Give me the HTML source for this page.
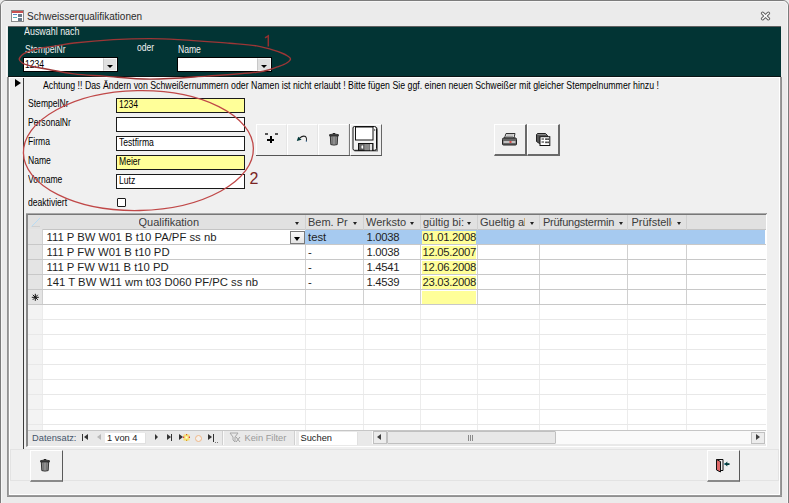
<!DOCTYPE html>
<html><head><meta charset="utf-8">
<style>
*{margin:0;padding:0;box-sizing:border-box}
html,body{width:789px;height:503px;overflow:hidden;background:#ebebeb;font-family:"Liberation Sans",sans-serif;}
.a{position:absolute}
.t{position:absolute;white-space:nowrap;line-height:11px;font-size:11px;transform-origin:0 0;color:#000}
.ms{transform:scaleX(0.78)}
.d{position:absolute;white-space:nowrap;line-height:11px;font-size:11.3px;color:#1e1e1e;overflow:hidden}
.h{position:absolute;white-space:nowrap;line-height:11px;font-size:11px;color:#3c3c3c;overflow:hidden}
svg{position:absolute;overflow:visible}
</style></head><body>
<div class="a" style="left:0px;top:0px;width:789px;height:510px;border:1px solid #7c7c7c;border-radius:6px 6px 0 0;background:#ebebeb"></div>
<div class="a" style="left:1px;top:1px;width:787px;height:508px;border:1px solid #f6f6f6;border-radius:5px 5px 0 0"></div>
<div class="a" style="left:11px;top:10px;width:13px;height:12px;border:1px solid #8a8a8a;background:#fff"></div>
<div class="a" style="left:12px;top:11px;width:11px;height:2px;background:#c85050"></div>
<div class="a" style="left:13px;top:14px;width:4px;height:1px;background:#5a8ac8"></div>
<div class="a" style="left:18px;top:14px;width:4px;height:3px;background:#6a7a8a"></div>
<div class="a" style="left:13px;top:17px;width:4px;height:1px;background:#5ab0b8"></div>
<div class="a" style="left:18px;top:18px;width:4px;height:3px;background:#6a7a8a"></div>
<div class="t" style="left:27px;top:11.5px;font-size:10px;line-height:10px;color:#2a2a2a">Schweisserqualifikationen</div>
<svg style="left:760px;top:10.5px" width="11" height="10" viewBox="0 0 11 10"><path d="M2.6 2.3 L8.4 7.7 M8.4 2.3 L2.6 7.7" stroke="#606060" stroke-width="3.4" stroke-linecap="round"/><path d="M2.6 2.3 L8.4 7.7 M8.4 2.3 L2.6 7.7" stroke="#fafafa" stroke-width="1.5" stroke-linecap="round"/></svg>
<div class="a" style="left:9px;top:77px;width:771px;height:418px;background:#f0f0f0"></div>
<div class="a" style="left:7px;top:77px;width:2px;height:420px;background:linear-gradient(90deg,#8a8a8a,#a8a8a8)"></div>
<div class="a" style="left:9px;top:77px;width:1px;height:418px;background:#fff"></div>
<div class="a" style="left:780px;top:77px;width:2px;height:420px;background:linear-gradient(90deg,#a0a0a0,#8a8a8a)"></div>
<div class="a" style="left:779px;top:77px;width:1px;height:418px;background:#fff"></div>
<div class="a" style="left:9px;top:494px;width:771px;height:1px;background:#fff"></div>
<div class="a" style="left:7px;top:495px;width:775px;height:2px;background:linear-gradient(#a0a0a0,#8a8a8a)"></div>
<div class="a" style="left:9px;top:77px;width:771px;height:1px;background:#fff"></div>
<div class="a" style="left:6px;top:26px;width:1px;height:51px;background:#f8f8f8"></div>
<div class="a" style="left:8px;top:26px;width:773px;height:51px;background:#023434;border-top:1px solid #606060;border-bottom:1px solid #0a1414"></div>
<div class="t" style="left:24px;top:25.5px;color:#f0f0f0;transform:scaleX(0.81)">Auswahl nach</div>
<div class="t ms" style="left:25px;top:44px;color:#f0f0f0">StempelNr</div>
<div class="t ms" style="left:137px;top:41.6px;color:#f0f0f0">oder</div>
<div class="t ms" style="left:178px;top:43.7px;color:#f0f0f0">Name</div>
<div class="a" style="left:23px;top:57px;width:95px;height:15px;background:#fff;border:1px solid #000;border-bottom-width:1.5px"></div>
<div class="a" style="left:103px;top:58px;width:14px;height:13px;background:#e0e0e0;border:1px solid #f4f4f4;border-left-color:#c8c8c8"></div>
<div class="a" style="left:107px;top:64.5px;width:0px;height:0px;border-left:3px solid transparent;border-right:3px solid transparent;border-top:3.2px solid #000"></div>
<div class="t ms" style="left:25px;top:58.8px;">1234</div>
<div class="a" style="left:177px;top:57px;width:95px;height:15px;background:#fff;border:1px solid #000;border-bottom-width:1.5px"></div>
<div class="a" style="left:257px;top:58px;width:14px;height:13px;background:#e0e0e0;border:1px solid #f4f4f4;border-left-color:#c8c8c8"></div>
<div class="a" style="left:261px;top:64.5px;width:0px;height:0px;border-left:3px solid transparent;border-right:3px solid transparent;border-top:3.2px solid #000"></div>
<div class="a" style="left:10px;top:78px;width:14px;height:372px;background:#efefef;border-right:1px solid #3a3a3a"></div>
<div class="a" style="left:15px;top:79px;width:0px;height:0px;border-top:4.5px solid transparent;border-bottom:4.5px solid transparent;border-left:6px solid #000"></div>
<div class="t" style="left:43px;top:80.4px;transform:scaleX(0.797)">Achtung !! Das Ändern von Schweißernummern oder Namen ist nicht erlaubt ! Bitte fügen Sie ggf. einen neuen Schweißer mit gleicher Stempelnummer hinzu !</div>
<div class="t ms" style="left:28px;top:97.6px;">StempelNr</div>
<div class="t ms" style="left:28px;top:116.6px;">PersonalNr</div>
<div class="t ms" style="left:28px;top:136.1px;">Firma</div>
<div class="t ms" style="left:28px;top:155.1px;">Name</div>
<div class="t ms" style="left:28px;top:174.1px;">Vorname</div>
<div class="t ms" style="left:28px;top:196.5px;">deaktiviert</div>
<div class="a" style="left:116px;top:98px;width:129px;height:15px;border:1px solid #1a1a1a;background:#ffff99"></div>
<div class="t ms" style="left:119px;top:98.5px;">1234</div>
<div class="a" style="left:116px;top:117px;width:129px;height:15px;border:1px solid #1a1a1a;background:#fff"></div>
<div class="a" style="left:116px;top:136px;width:129px;height:15px;border:1px solid #1a1a1a;background:#fff"></div>
<div class="t ms" style="left:119px;top:136.5px;">Testfirma</div>
<div class="a" style="left:116px;top:155px;width:129px;height:15px;border:1px solid #1a1a1a;background:#ffff99"></div>
<div class="t ms" style="left:119px;top:155.5px;">Meier</div>
<div class="a" style="left:116px;top:174px;width:129px;height:15px;border:1px solid #1a1a1a;background:#fff"></div>
<div class="t ms" style="left:119px;top:174.5px;">Lutz</div>
<div class="a" style="left:117px;top:198px;width:9px;height:9px;border:1px solid #1a1a1a;border-radius:1px;background:#fff"></div>
<div class="a" style="left:256px;top:124px;width:31px;height:31px;background:#f0f0f0;border-top:1px solid #fff;border-left:1px solid #fff;border-right:1px solid #e6e6e6"></div>
<div class="a" style="left:287px;top:124px;width:31px;height:31px;background:#f0f0f0;border-top:1px solid #fff;border-left:1px solid #fff;border-right:1px solid #e6e6e6"></div>
<div class="a" style="left:318px;top:124px;width:31px;height:31px;background:#f0f0f0;border-top:1px solid #fff;border-left:1px solid #fff;border-right:1px solid #e6e6e6"></div>
<div class="a" style="left:256px;top:155px;width:94px;height:1px;background:#555"></div>
<div class="a" style="left:349px;top:124px;width:1px;height:31px;background:#7a7a7a"></div>
<div class="a" style="left:350px;top:124px;width:32px;height:32px;background:#f0f0f0;border-top:1px solid #fff;border-left:1px solid #fff;border-right:1px solid #666;border-bottom:1px solid #555"></div>
<div class="a" style="left:494px;top:124px;width:33px;height:32px;background:#f0f0f0;border-top:1px solid #fff;border-left:1px solid #fff;border-right:2px solid #6a6a6a;border-bottom:2px solid #6a6a6a"></div>
<div class="a" style="left:527px;top:124px;width:33px;height:32px;background:#f0f0f0;border-top:1px solid #fff;border-left:1px solid #fff;border-right:2px solid #6a6a6a;border-bottom:2px solid #6a6a6a"></div>
<div class="a" style="left:26px;top:213px;width:741px;height:234px;background:#fff;border-top:2px solid #777;border-left:2px solid #888;border-right:1px solid #fff;border-bottom:1px solid #fff"></div>
<div class="a" style="left:26px;top:213px;width:740px;height:1px;background:#a8a8a8"></div>
<div class="a" style="left:28px;top:215px;width:738px;height:14px;background:#e1e1e1"></div>
<div class="a" style="left:42px;top:229px;width:724px;height:1px;background:#c4c4c4"></div>
<div class="a" style="left:42px;top:229px;width:1px;height:75px;background:#d0d0d0"></div>
<div class="a" style="left:42px;top:304px;width:1px;height:126px;background:#ececec"></div>
<div class="a" style="left:305px;top:215px;width:1px;height:89px;background:#d0d0d0"></div>
<div class="a" style="left:305px;top:304px;width:1px;height:126px;background:#ececec"></div>
<div class="a" style="left:363px;top:215px;width:1px;height:89px;background:#d0d0d0"></div>
<div class="a" style="left:363px;top:304px;width:1px;height:126px;background:#ececec"></div>
<div class="a" style="left:420px;top:215px;width:1px;height:89px;background:#d0d0d0"></div>
<div class="a" style="left:420px;top:304px;width:1px;height:126px;background:#ececec"></div>
<div class="a" style="left:477px;top:215px;width:1px;height:89px;background:#d0d0d0"></div>
<div class="a" style="left:477px;top:304px;width:1px;height:126px;background:#ececec"></div>
<div class="a" style="left:539px;top:215px;width:1px;height:89px;background:#d0d0d0"></div>
<div class="a" style="left:539px;top:304px;width:1px;height:126px;background:#ececec"></div>
<div class="a" style="left:627px;top:215px;width:1px;height:89px;background:#d0d0d0"></div>
<div class="a" style="left:627px;top:304px;width:1px;height:126px;background:#ececec"></div>
<div class="a" style="left:686px;top:215px;width:1px;height:89px;background:#d0d0d0"></div>
<div class="a" style="left:686px;top:304px;width:1px;height:126px;background:#ececec"></div>
<div class="a" style="left:28px;top:304px;width:14px;height:126px;background:#f3f3f3"></div>
<div class="a" style="left:28px;top:229px;width:14px;height:75px;background:#e4e4e4"></div>
<div class="a" style="left:28px;top:244px;width:738px;height:1px;background:#c8c8c8"></div>
<div class="a" style="left:28px;top:259px;width:738px;height:1px;background:#c8c8c8"></div>
<div class="a" style="left:28px;top:274px;width:738px;height:1px;background:#c8c8c8"></div>
<div class="a" style="left:28px;top:289px;width:738px;height:1px;background:#c8c8c8"></div>
<div class="a" style="left:28px;top:304px;width:738px;height:1px;background:#c8c8c8"></div>
<div class="a" style="left:28px;top:319px;width:738px;height:1px;background:#e8e8e8"></div>
<div class="a" style="left:28px;top:334px;width:738px;height:1px;background:#e8e8e8"></div>
<div class="a" style="left:28px;top:349px;width:738px;height:1px;background:#e8e8e8"></div>
<div class="a" style="left:28px;top:364px;width:738px;height:1px;background:#e8e8e8"></div>
<div class="a" style="left:28px;top:379px;width:738px;height:1px;background:#e8e8e8"></div>
<div class="a" style="left:28px;top:394px;width:738px;height:1px;background:#e8e8e8"></div>
<div class="a" style="left:28px;top:409px;width:738px;height:1px;background:#e8e8e8"></div>
<div class="a" style="left:28px;top:424px;width:738px;height:1px;background:#e8e8e8"></div>
<div class="a" style="left:43px;top:230px;width:722px;height:14px;background:#a6caf0"></div>
<div class="a" style="left:43px;top:230px;width:262px;height:14px;background:#fff"></div>
<div class="a" style="left:422px;top:231px;width:54px;height:13px;background:#ffff99"></div>
<div class="a" style="left:422px;top:246px;width:54px;height:13px;background:#ffff99"></div>
<div class="a" style="left:422px;top:261px;width:54px;height:13px;background:#ffff99"></div>
<div class="a" style="left:422px;top:276px;width:54px;height:13px;background:#ffff99"></div>
<div class="a" style="left:422px;top:291px;width:54px;height:13px;background:#ffff99"></div>
<div class="h" style="left:138.5px;top:216.8px;width:70px;height:12px">Qualifikation</div>
<div class="a" style="left:295px;top:222px;width:0px;height:0px;border-left:2.8px solid transparent;border-right:2.8px solid transparent;border-top:3.2px solid #222"></div>
<div class="h" style="left:308px;top:216.8px;width:41.5px;height:12px">Bem. Pr</div>
<div class="a" style="left:352.5px;top:222px;width:0px;height:0px;border-left:2.8px solid transparent;border-right:2.8px solid transparent;border-top:3.2px solid #222"></div>
<div class="h" style="left:366px;top:216.8px;width:41px;height:12px">Werksto</div>
<div class="a" style="left:410px;top:222px;width:0px;height:0px;border-left:2.8px solid transparent;border-right:2.8px solid transparent;border-top:3.2px solid #222"></div>
<div class="h" style="left:423px;top:216.8px;width:41.5px;height:12px">gültig bi:</div>
<div class="a" style="left:467px;top:222px;width:0px;height:0px;border-left:2.8px solid transparent;border-right:2.8px solid transparent;border-top:3.2px solid #222"></div>
<div class="h" style="left:480px;top:216.8px;width:45px;height:12px">Gueltig ab</div>
<div class="a" style="left:530.3px;top:222px;width:0px;height:0px;border-left:2.8px solid transparent;border-right:2.8px solid transparent;border-top:3.2px solid #222"></div>
<div class="h" style="left:543px;top:216.8px;width:73px;height:12px;letter-spacing:-0.25px">Prüfungstermin</div>
<div class="a" style="left:618.5px;top:222px;width:0px;height:0px;border-left:2.8px solid transparent;border-right:2.8px solid transparent;border-top:3.2px solid #222"></div>
<div class="h" style="left:631.5px;top:216.8px;width:40px;height:12px">Prüfstelle</div>
<div class="a" style="left:676.5px;top:222px;width:0px;height:0px;border-left:2.8px solid transparent;border-right:2.8px solid transparent;border-top:3.2px solid #222"></div>
<svg style="left:31px;top:217px" width="10" height="10"><path d="M0.5 9.5 L9 1 L9 9.5 Z" fill="#e0e0e0" stroke="none"/><path d="M0.5 9.5 L9 1" stroke="#b8dcf4" stroke-width="1"/><path d="M1 9.5 L9 9.5" stroke="#d0d0d0" stroke-width="1"/></svg>
<div class="d" style="left:46.5px;top:232.0px;width:255px;height:12px">111 P BW W01 B t10 PA/PF ss nb</div>
<div class="d" style="left:308px;top:232.0px;width:54px;height:12px">test</div>
<div class="d" style="left:366.5px;top:232.0px;width:54px;height:12px;letter-spacing:-0.3px">1.0038</div>
<div class="d" style="left:422.5px;top:232.0px;width:54px;height:12px;letter-spacing:-0.3px">01.01.2008</div>
<div class="d" style="left:46.5px;top:247.0px;width:255px;height:12px">111 P FW W01 B t10 PD</div>
<div class="d" style="left:308px;top:247.0px;width:54px;height:12px">-</div>
<div class="d" style="left:366.5px;top:247.0px;width:54px;height:12px;letter-spacing:-0.3px">1.0038</div>
<div class="d" style="left:422.5px;top:247.0px;width:54px;height:12px;letter-spacing:-0.3px">12.05.2007</div>
<div class="d" style="left:46.5px;top:262.0px;width:255px;height:12px">111 P FW W11 B t10 PD</div>
<div class="d" style="left:308px;top:262.0px;width:54px;height:12px">-</div>
<div class="d" style="left:366.5px;top:262.0px;width:54px;height:12px;letter-spacing:-0.3px">1.4541</div>
<div class="d" style="left:422.5px;top:262.0px;width:54px;height:12px;letter-spacing:-0.3px">12.06.2008</div>
<div class="d" style="left:46.5px;top:277.0px;width:255px;height:12px">141 T BW W11 wm t03 D060 PF/PC ss nb</div>
<div class="d" style="left:308px;top:277.0px;width:54px;height:12px">-</div>
<div class="d" style="left:366.5px;top:277.0px;width:54px;height:12px;letter-spacing:-0.3px">1.4539</div>
<div class="d" style="left:422.5px;top:277.0px;width:54px;height:12px;letter-spacing:-0.3px">23.03.2008</div>
<div class="a" style="left:290px;top:231px;width:15px;height:13px;background:linear-gradient(#fafafa,#e4e4e4);border:1px solid #7a7a7a"></div>
<div class="a" style="left:294.2px;top:236.5px;width:0px;height:0px;border-left:3.3px solid transparent;border-right:3.3px solid transparent;border-top:4px solid #000"></div>
<svg style="left:31px;top:292.5px" width="9" height="9"><path d="M4.3 0.8 V7.8 M0.8 4.3 H7.8 M1.8 1.8 L6.8 6.8 M1.8 6.8 L6.8 1.8" stroke="#111" stroke-width="1"/></svg>
<div class="a" style="left:28px;top:430px;width:738px;height:1px;background:#c6c6c6"></div>
<div class="a" style="left:28px;top:431px;width:738px;height:15px;background:#e9e9e9"></div>
<div class="t" style="left:32px;top:432.6px;color:#44546a;font-size:9.3px">Datensatz:</div>
<div class="a" style="left:105px;top:433px;width:41px;height:11px;background:#fff;border-right:1px solid #e0e0e0;border-bottom:1px solid #e0e0e0"></div>
<div class="t" style="left:107px;top:432.8px;color:#222;font-size:9.3px">1 von 4</div>
<div class="a" style="left:82px;top:434px;width:1px;height:7px;background:#333"></div>
<div class="a" style="left:83.5px;top:434px;width:0px;height:0px;border-top:3.5px solid transparent;border-bottom:3.5px solid transparent;border-right:4px solid #333"></div>
<div class="a" style="left:97px;top:434px;width:0px;height:0px;border-top:3.5px solid transparent;border-bottom:3.5px solid transparent;border-right:4px solid #b8b8b8"></div>
<div class="a" style="left:154.5px;top:434px;width:0px;height:0px;border-top:3.5px solid transparent;border-bottom:3.5px solid transparent;border-left:3.5px solid #333"></div>
<div class="a" style="left:166.5px;top:434px;width:0px;height:0px;border-top:3.5px solid transparent;border-bottom:3.5px solid transparent;border-left:4px solid #333"></div>
<div class="a" style="left:171px;top:434px;width:1.3px;height:7px;background:#333"></div>
<div class="a" style="left:178.5px;top:434px;width:0px;height:0px;border-top:3.5px solid transparent;border-bottom:3.5px solid transparent;border-left:4px solid #333"></div>
<svg style="left:183px;top:434px" width="7" height="7"><rect x="0.5" y="0.5" width="6" height="6" fill="#f4e070"/><rect x="2.5" y="2.5" width="2" height="2" fill="#fffbe0"/><rect x="0" y="2.5" width="1.2" height="1.5" fill="#e04040"/><rect x="3" y="0" width="1.2" height="1.2" fill="#e06020"/><rect x="5.8" y="2.5" width="1.2" height="1.5" fill="#e04040"/><rect x="3" y="5.8" width="1.2" height="1.2" fill="#e0a020"/></svg>
<div class="a" style="left:194.5px;top:434.5px;width:7px;height:7px;border-radius:50%;background:#f4f0ec;border:1.5px solid #f0b888"></div>
<div class="a" style="left:208px;top:434px;width:0px;height:0px;border-top:3.5px solid transparent;border-bottom:3.5px solid transparent;border-left:4px solid #333"></div>
<div class="a" style="left:212.5px;top:434px;width:1.3px;height:8px;background:#333"></div>
<div class="a" style="left:214.5px;top:441.5px;width:1px;height:1px;background:#777"></div>
<div class="a" style="left:216.5px;top:441.5px;width:1px;height:1px;background:#777"></div>
<div class="a" style="left:222px;top:431px;width:1px;height:14px;background:#d0d0d0"></div>
<div class="a" style="left:223px;top:431px;width:1px;height:14px;background:#fafafa"></div>
<svg style="left:229px;top:432px" width="12" height="11"><path d="M1 1 H9 L6 5 V10 L4 8 V5 Z" fill="none" stroke="#a8a8a8" stroke-width="1"/><path d="M7 5 L11 10 M11 5 L7 10" stroke="#a0a0a0" stroke-width="1"/></svg>
<div class="t" style="left:244.5px;top:432.6px;color:#9a9a9a;font-size:9.3px">Kein Filter</div>
<div class="a" style="left:294px;top:431px;width:1px;height:14px;background:#d0d0d0"></div>
<div class="a" style="left:295px;top:431px;width:1px;height:14px;background:#fafafa"></div>
<div class="a" style="left:299px;top:432px;width:59px;height:13px;background:#fff;border-right:1px solid #e0e0e0"></div>
<div class="t" style="left:300.5px;top:432.8px;color:#222;font-size:9.3px">Suchen</div>
<div class="a" style="left:372px;top:431px;width:394px;height:13px;background:#fafafa"></div>
<div class="a" style="left:373px;top:431px;width:14px;height:13px;background:#ececec;border:1px solid #c0c0c0"></div>
<div class="a" style="left:377px;top:434px;width:0px;height:0px;border-top:3.5px solid transparent;border-bottom:3.5px solid transparent;border-right:4px solid #404040"></div>
<div class="a" style="left:387px;top:431px;width:169px;height:13px;background:#e8e8e8;border:1px solid #c0c0c0;border-radius:1px"></div>
<div class="a" style="left:468px;top:434.5px;width:1px;height:6px;background:#8a8a8a"></div>
<div class="a" style="left:470px;top:434.5px;width:1px;height:6px;background:#8a8a8a"></div>
<div class="a" style="left:472px;top:434.5px;width:1px;height:6px;background:#8a8a8a"></div>
<div class="a" style="left:751px;top:432px;width:14px;height:12px;background:#ececec;border:1px solid #c0c0c0"></div>
<div class="a" style="left:756px;top:434px;width:0px;height:0px;border-top:3.5px solid transparent;border-bottom:3.5px solid transparent;border-left:4px solid #404040"></div>
<div class="a" style="left:10px;top:449px;width:769px;height:32px;border:1px solid #e3e3e3"></div>
<div class="a" style="left:30px;top:450px;width:33px;height:32px;background:#f0f0f0;border-top:1px solid #fff;border-left:1px solid #fff;border-right:1px solid #5a5a5a;border-bottom:2px solid #8a8a8a"></div>
<div class="a" style="left:707px;top:450px;width:33px;height:32px;background:#f0f0f0;border-top:1px solid #fff;border-left:1px solid #fff;border-right:1px solid #5a5a5a;border-bottom:2px solid #8a8a8a"></div>
<svg style="left:328.5px;top:132.8px" width="11" height="14" viewBox="0 0 11 14"><rect x="3.8" y="0" width="2.4" height="1.3" fill="#222"/><path d="M0.6 1.6 Q5 0.4 9.4 1.6 L9.4 3 L0.6 3 Z" fill="#555" stroke="#222" stroke-width="0.8"/><path d="M1.3 3 L8.7 3 L8.2 11.6 Q5 12.6 1.8 11.6 Z" fill="#8a8a8a" stroke="#222" stroke-width="0.9"/><path d="M3.4 3.5 V11.5 M5 3.5 V12 M6.6 3.5 V11.5" stroke="#5a5a5a" stroke-width="0.7"/><path d="M4.2 3.5 V11.5 M5.8 3.5 V11.5" stroke="#b8b8b8" stroke-width="0.5"/></svg>
<svg style="left:40.3px;top:459px" width="11" height="14" viewBox="0 0 11 14"><rect x="3.8" y="0" width="2.4" height="1.3" fill="#222"/><path d="M0.6 1.6 Q5 0.4 9.4 1.6 L9.4 3 L0.6 3 Z" fill="#555" stroke="#222" stroke-width="0.8"/><path d="M1.3 3 L8.7 3 L8.2 11.6 Q5 12.6 1.8 11.6 Z" fill="#8a8a8a" stroke="#222" stroke-width="0.9"/><path d="M3.4 3.5 V11.5 M5 3.5 V12 M6.6 3.5 V11.5" stroke="#5a5a5a" stroke-width="0.7"/><path d="M4.2 3.5 V11.5 M5.8 3.5 V11.5" stroke="#b8b8b8" stroke-width="0.5"/></svg>
<div class="a" style="left:264.5px;top:133px;width:3px;height:2px;background:#555"></div>
<div class="a" style="left:274.5px;top:133px;width:3px;height:2px;background:#555"></div>
<div class="a" style="left:267px;top:138.5px;width:7px;height:2px;background:#000"></div>
<div class="a" style="left:269.5px;top:136px;width:2px;height:7px;background:#000"></div>
<svg style="left:296px;top:135px" width="12" height="8" viewBox="0 0 12 8"><path d="M3.5 3.2 Q7 0.2 9.6 1.6 Q11.2 3 10.4 6.3" fill="none" stroke="#222" stroke-width="1.1"/><path d="M0.8 6 L2.2 1.8 L5.6 4.8 Z" fill="#003838"/><rect x="9.8" y="5.6" width="1" height="1" fill="#3a80c0"/></svg>
<svg style="left:352px;top:125.5px" width="28" height="28" viewBox="0 0 28 28"><path d="M2 3 Q2 1 4 1 L23 1 Q26 1 26 4 L26 25.5 L3 25.5 Q2 25.5 2 24.5 Z" fill="#777" /><path d="M1 2 Q1 0.5 2.5 0.5 L22.5 0.5 Q24.5 0.5 24.5 2.5 L24.5 22.5 Q24.5 24.3 22.7 24.3 L2.5 24.3 Q1 24.3 1 22.8 Z" fill="#f4f4f4" stroke="#111" stroke-width="1"/><rect x="3.5" y="1" width="17.5" height="13" fill="#fff" stroke="#111" stroke-width="1"/><rect x="22" y="3.4" width="1.2" height="1.2" fill="#333"/><rect x="6.5" y="17.5" width="14.5" height="6.8" fill="#666" stroke="#111" stroke-width="1"/><ellipse cx="10.3" cy="21" rx="0.9" ry="1.8" fill="#fff"/><rect x="12.5" y="18.2" width="5" height="6" fill="#8c8c8c"/><rect x="18.2" y="18" width="1.6" height="6.3" fill="#fff"/></svg>
<svg style="left:502px;top:133px" width="15" height="13" viewBox="0 0 15 13"><path d="M4 0.5 L13 0.5 L12 5 L2.5 5 Z" fill="#f0f0f0" stroke="#333" stroke-width="1"/><path d="M4.5 2 H11.5 M4 3.5 H11" stroke="#888" stroke-width="0.8"/><path d="M1.5 5 L13.5 5 Q14.5 5 14.5 6.5 L14.5 11 Q14.5 12 13.5 12 L1.5 12 Q0.5 12 0.5 11 L0.5 6.5 Q0.5 5 1.5 5 Z" fill="#666" stroke="#222" stroke-width="1"/><rect x="1.5" y="8.2" width="12" height="1.6" fill="#d8d8d8"/><rect x="7.5" y="8.2" width="2" height="1.6" fill="#e03030"/></svg>
<svg style="left:536px;top:132.5px" width="15" height="14" viewBox="0 0 15 14"><path d="M1.5 0.5 L9.5 0.5 L11.5 2.5 L11.5 9.5 L3.5 10.5 L0.5 8.5 L0.5 1.5 Z" fill="#555" stroke="#222" stroke-width="1"/><path d="M1.5 1.5 L10 1.5" stroke="#999" stroke-width="0.8"/><rect x="4" y="3.7" width="9.8" height="8.8" fill="#fff" stroke="#111" stroke-width="1"/><path d="M5.5 6 H8 M5.5 9 H8" stroke="#222" stroke-width="1"/><rect x="9.3" y="5.3" width="1.5" height="1.7" fill="#222"/><rect x="11.3" y="5.3" width="1.5" height="1.7" fill="#222"/><rect x="9.3" y="8.5" width="1.5" height="1.7" fill="#222"/><rect x="11.3" y="8.5" width="1.5" height="1.7" fill="#222"/></svg>
<svg style="left:715px;top:459px" width="16" height="14" viewBox="0 0 16 14"><path d="M1.5 0.5 H8 V11.5 H3" fill="none" stroke="#111" stroke-width="1"/><path d="M1.5 0.5 L5.5 2.5 L5.5 13 L1.5 11 Z" fill="#e06a6a" stroke="#111" stroke-width="1"/><path d="M9 5 H12" stroke="#2a80a0" stroke-width="1.2"/><path d="M9.5 5 L12.3 2.6 L12.3 7.4 Z" fill="#003a3a"/><rect x="12" y="4.2" width="2.5" height="1.8" fill="#003a3a"/></svg>
<svg style="left:0;top:0" width="789" height="503"><path d="M19.2 59.3 C19.1 57.9 20.8 56.0 22.3 54.7 C24.3 53.0 27.9 51.6 30.7 50.5 C33.4 49.5 35.7 49.1 39 48.4 C43.6 47.5 50.0 46.8 55.7 45.9 C61.7 45.0 65.8 43.9 74 43 C90.6 41.2 124.4 38.6 150 38.6 C176.3 38.6 210.3 41.8 229.8 43.3 C241.2 44.2 248.8 44.5 256.7 45.9 C263.0 47.0 268.8 48.7 273.4 50.1 C276.7 51.1 279.2 51.9 281.7 53 C283.9 53.9 286.0 54.9 287.6 56 C288.8 56.9 290.5 57.8 290.5 58.9 C290.5 60.1 288.4 61.8 286.7 63 C284.4 64.6 280.6 65.7 277.6 66.8 C274.8 67.9 272.3 68.9 269.2 69.7 C265.5 70.7 262.3 71.4 256.7 72.2 C245.7 73.7 224.1 75.0 207 76.1 C188.7 77.3 168.0 79.2 150 79.1 C133.8 79.0 117.7 77.0 104 76.1 C92.9 75.3 83.7 75.1 74 73.9 C64.8 72.8 55.2 70.8 47.4 69.3 C41.2 68.1 35.3 67.3 30.7 66 C27.4 65.1 24.3 64.4 22.3 63 C20.8 62.0 19.3 60.6 19.2 59.3 Z" fill="none" stroke="#9c3636" stroke-width="1.4"/><ellipse cx="138.4" cy="150.6" rx="115" ry="59.9" transform="rotate(-1.2 138.4 150.6)" fill="none" stroke="#c04848" stroke-width="1.3"/></svg>
<svg style="left:262px;top:35px" width="9" height="12"><path d="M3 2.8 L6.3 0.8 V11.5" fill="none" stroke="#923030" stroke-width="1.5"/></svg>
<div class="t" style="left:249.5px;top:170.5px;font-size:16px;line-height:16px;color:#7a2424">2</div>
</body></html>
